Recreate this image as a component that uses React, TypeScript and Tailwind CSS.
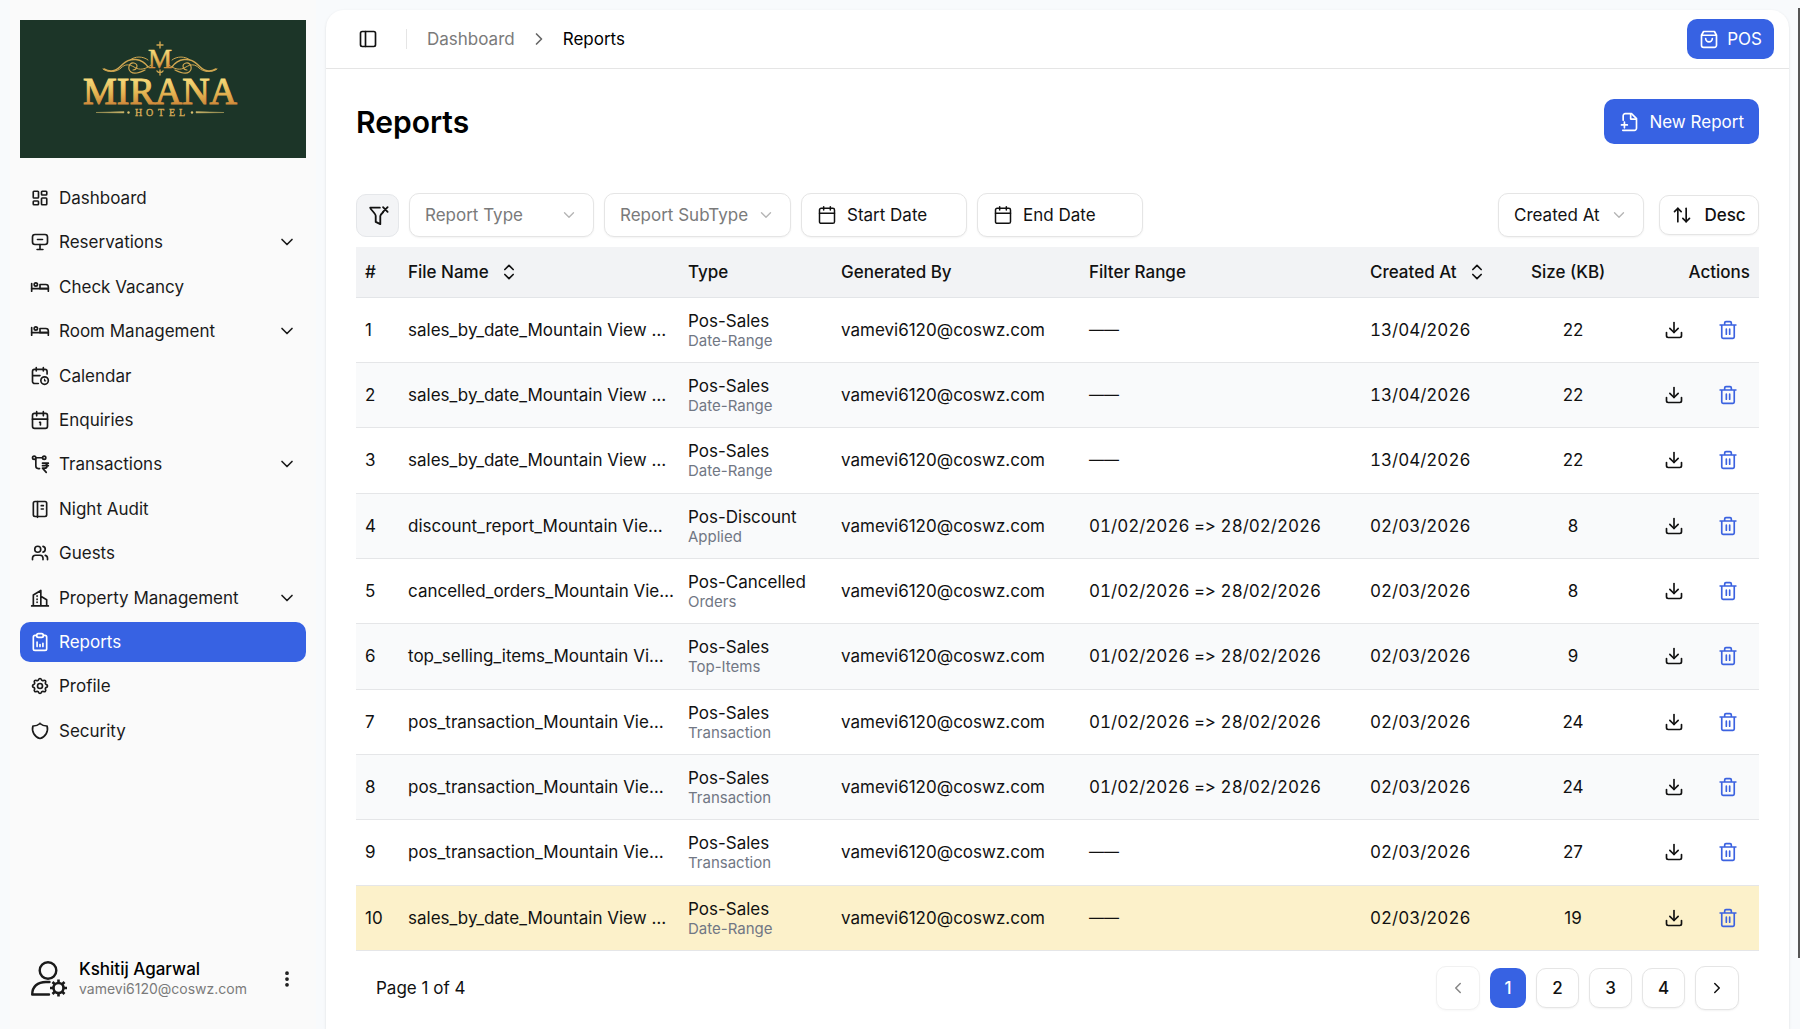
import React from "react";
import {
  ArrowUpDown,
  Calendar,
  ChevronDown,
  ChevronLeft,
  ChevronRight,
  ChevronsUpDown,
  Download,
  EllipsisVertical,
  LayoutDashboard,
  PanelLeft,
  Users,
} from "lucide-react";
import { TbBed, TbSettings, TbShield } from "react-icons/tb";

type SvgProps = { className?: string; children: React.ReactNode };

function Stroke({ className = "size-5", children }: SvgProps) {
  return (
    <svg
      viewBox="0 0 24 24"
      fill="none"
      stroke="currentColor"
      strokeWidth="2"
      strokeLinecap="round"
      strokeLinejoin="round"
      className={className}
      aria-hidden="true"
    >
      {children}
    </svg>
  );
}

const SignIcon = () => (
  <Stroke>
    <rect x="3" y="3" width="18" height="12" rx="3" />
    <path d="M9 9h6M12 15v6M8.5 21h7" />
  </Stroke>
);

const CalendarTimeIcon = () => (
  <Stroke>
    <path d="M20.500 9.500V6.500a2.500 2.500 0 0 0-2.500-2.500H5.500A2.500 2.500 0 0 0 3 6.500v12A2.500 2.500 0 0 0 5.500 21H10" />
    <path d="M7.500 2v4M16 2v4M3.500 11.500H12" />
    <circle cx="17.500" cy="17.500" r="4.500" />
    <path d="M17.500 15.800v1.900h1.300" strokeWidth="1.500" />
  </Stroke>
);

const EnquiryIcon = () => (
  <Stroke>
    <rect x="3" y="4" width="18" height="18" rx="2.5" />
    <path d="M8 2v5M16 2v5M3 11h18" />
    <path d="M11.500 14.800h1v3.200" />
  </Stroke>
);

const TransactionIcon = () => (
  <Stroke>
    <circle cx="5" cy="4.5" r="2" />
    <circle cx="17" cy="4.5" r="2" />
    <path d="M7 4.5h8M7 6v8.5a3 3 0 0 0 3 3h1.5" />
    <path d="M15 11h7M15 14h7M15 11h2.5a3 3 0 0 1 0 6H15l4.5 5" />
  </Stroke>
);

const AuditIcon = () => (
  <Stroke>
    <rect x="4" y="3" width="16" height="18" rx="2" />
    <path d="M9 3v19M13.500 8H16M13.500 12H16" />
  </Stroke>
);

const BuildingIcon = () => (
  <Stroke>
    <path d="M2 21.5h20M4 21V8.5L13 3v18M13 10l7 4v7" />
    <path d="M8.5 9.5v9" strokeDasharray="0.5 3.2" />
  </Stroke>
);

const ReportIcon = () => (
  <Stroke>
    <path d="M8 4H6a2 2 0 0 0-2 2v14a2 2 0 0 0 2 2h12a2 2 0 0 0 2-2V6a2 2 0 0 0-2-2h-2" />
    <rect x="8" y="2" width="8" height="4.5" rx="2" />
    <path d="M8.5 12v5.5M12 15v2.5M15.5 13.5v4" />
  </Stroke>
);

const FilterClearIcon = () => (
  <Stroke className="size-[22px]">
    <path d="M14 4H3.500c0 2 6 6 6 9v6.500l5 2.500v-9c0-1 1.500-2.600 3-4" />
    <path d="M17.500 3.500l5 5M22.500 3.500l-5 5" />
  </Stroke>
);

const BagIcon = () => (
  <Stroke className="size-5">
    <path d="M3 7.500 5.500 3h13L21 7.500V19.500a2.500 2.500 0 0 1-2.500 2.500h-13A2.500 2.500 0 0 1 3 19.500zM3 7.500h18" />
    <path d="M8 11.500a4 4 0 0 0 8 0" />
  </Stroke>
);

const FilePlusIcon = () => (
  <Stroke className="size-5">
    <path d="M5 10V4.500A2.500 2.500 0 0 1 7.500 2H15l6 6v11.500a2.500 2.500 0 0 1-2.500 2.500H4.500" />
    <path d="M14 2.500V8.500h6.500M6.500 12v7M3 15.500h7" />
  </Stroke>
);

const TrashIcon = () => (
  <Stroke className="size-5 text-[#3b62e0]">
    <path d="M2.500 6h19M4.500 6v14.500a1.500 1.500 0 0 0 1.500 1.500h12a1.500 1.500 0 0 0 1.500-1.500V6M8 6V3.500A1.500 1.500 0 0 1 9.500 2h5A1.500 1.500 0 0 1 16 3.500V6M10 11v6M14 11v6" />
  </Stroke>
);

const UserGearIcon = () => (
  <svg viewBox="0 0 36 36" className="size-9" fill="none" stroke="currentColor" strokeWidth="2.400" aria-hidden="true">
    <circle cx="17" cy="9.500" r="8.300" />
    <path d="M18.500 21H15C6.500 21 1.200 25.500 1.200 33.500H18" strokeLinejoin="round" strokeLinecap="round" />
    <circle cx="27.500" cy="27" r="5" strokeWidth="2.600" />
    <path
      strokeWidth="2.600"
      d="M27.500 18.500v3.500M27.500 32v3.500M19 27h3.500M32.500 27H36M21.500 21l2.500 2.500M31 30.500l2.500 2.500M33.500 21 31 23.500M24 30.500 21.500 33"
    />
  </svg>
);

function Logo() {
  return (
    <svg viewBox="0 0 286 138" className="block w-full bg-[#1c3528]" role="img" aria-label="Mirana Hotel">
      <defs>
        <linearGradient id="gold" x1="0" y1="0" x2="0" y2="1">
          <stop offset="0.2" stopColor="#f6dc7c" />
          <stop offset="0.55" stopColor="#e5b552" />
          <stop offset="0.8" stopColor="#d08c3c" />
        </linearGradient>
      </defs>
      <g fill="none" stroke="#cfa650" strokeLinecap="round">
        <path strokeWidth="1.500" d="M128 47c-6-9-18-10-25-3-5 5-10 10-19 5" />
        <path strokeWidth="1" d="M131 45c-5 4-11 6-17 2-5-3-9-3-13 1s-13 5-18 1M128 40c-5-4-13-4-18 0" />
        <path strokeWidth="1.200" d="M113 50c4 0 6-6 1-7s-7 6-3 9 10 0 14-2" />
        <path strokeWidth="1.500" d="M152 47c6-9 18-10 25-3 5 5 10 10 19 5" />
        <path strokeWidth="1" d="M149 45c5 4 11 6 17 2 5-3 9-3 13 1s13 5 18 1M152 40c5-4 13-4 18 0" />
        <path strokeWidth="1.200" d="M167 50c-4 0-6-6-1-7s7 6 3 9-10 0-14-2" />
        <path strokeWidth="1.400" d="M140 22v6M137 25h6M140 50v5M137 51c1 2 5 2 6 0" />
      </g>
      <g fill="url(#gold)" stroke="url(#gold)" fontFamily="Liberation Serif, serif" textAnchor="middle">
        <text x="140" y="48" fontSize="27" strokeWidth="0.500">M</text>
        <text x="140" y="84" fontSize="38" strokeWidth="1">MIRANA</text>
      </g>
      <text x="115 126 138 149 159" y="96" fontSize="10" fill="#d9ad58" stroke="#d9ad58" strokeWidth="0.300" fontFamily="Liberation Serif, serif">
        HOTEL
      </text>
      <path d="M76 92.500 104 91.500v1.500zM204 92.500 176 91.500v1.500z" fill="#d0b86c" stroke="#b5a45e" strokeWidth="0.500" />
      <circle cx="108.500" cy="92.500" r="1.200" fill="#d9c070" />
      <circle cx="172" cy="92.500" r="1.200" fill="#d9c070" />
    </svg>
  );
}

const nav = [
  { label: "Dashboard", icon: <LayoutDashboard className="size-[18px]" strokeWidth={2.2} /> },
  { label: "Reservations", icon: <SignIcon />, sub: true },
  { label: "Check Vacancy", icon: <TbBed className="size-5" /> },
  { label: "Room Management", icon: <TbBed className="size-5" />, sub: true },
  { label: "Calendar", icon: <CalendarTimeIcon /> },
  { label: "Enquiries", icon: <EnquiryIcon /> },
  { label: "Transactions", icon: <TransactionIcon />, sub: true },
  { label: "Night Audit", icon: <AuditIcon /> },
  { label: "Guests", icon: <Users className="size-[18px]" strokeWidth={2.2} /> },
  { label: "Property Management", icon: <BuildingIcon />, sub: true },
  { label: "Reports", icon: <ReportIcon />, active: true },
  { label: "Profile", icon: <TbSettings className="size-5" /> },
  { label: "Security", icon: <TbShield className="size-5" /> },
];

const FEB = "01/02/2026 => 28/02/2026";
const NONE = "——";
const rows = [
  ["sales_by_date_Mountain View …", "Pos-Sales", "Date-Range", NONE, "13/04/2026", 22],
  ["sales_by_date_Mountain View …", "Pos-Sales", "Date-Range", NONE, "13/04/2026", 22],
  ["sales_by_date_Mountain View …", "Pos-Sales", "Date-Range", NONE, "13/04/2026", 22],
  ["discount_report_Mountain Vie…", "Pos-Discount", "Applied", FEB, "02/03/2026", 8],
  ["cancelled_orders_Mountain Vie…", "Pos-Cancelled", "Orders", FEB, "02/03/2026", 8],
  ["top_selling_items_Mountain Vi…", "Pos-Sales", "Top-Items", FEB, "02/03/2026", 9],
  ["pos_transaction_Mountain Vie…", "Pos-Sales", "Transaction", FEB, "02/03/2026", 24],
  ["pos_transaction_Mountain Vie…", "Pos-Sales", "Transaction", FEB, "02/03/2026", 24],
  ["pos_transaction_Mountain Vie…", "Pos-Sales", "Transaction", NONE, "02/03/2026", 27],
  ["sales_by_date_Mountain View …", "Pos-Sales", "Date-Range", NONE, "02/03/2026", 19],
];

function Select({ label, value, className }: { label: string; value: string; className: string }) {
  return (
    <div className={`relative ${className}`}>
      <select
        aria-label={label}
        className="h-11 w-full appearance-none rounded-[10px] border border-[#e5e5e5] bg-white pr-9 pl-[15px] text-[17px] shadow-xs"
      >
        <option>{value}</option>
      </select>
      <ChevronDown className="pointer-events-none absolute top-[13px] right-4 size-[18px] text-[#b5b5b5]" strokeWidth={1.8} />
    </div>
  );
}

function DateButton({ label }: { label: string }) {
  return (
    <button className="flex h-11 w-[166px] items-center gap-[10px] rounded-[10px] border border-[#e5e5e5] bg-white px-[15px] shadow-xs">
      <Calendar className="size-5" strokeWidth={1.8} />
      {label}
    </button>
  );
}

function Sidebar() {
  return (
    <aside className="mx-[10px] flex w-[306px] shrink-0 flex-col bg-[#fafafa] px-[10px] pt-5">
      <Logo />
      <nav className="mt-5 flex h-[573px] flex-col justify-between">
        {nav.map((item) => (
          <a
            key={item.label}
            href="#"
            className={`flex h-10 items-center rounded-[10px] pr-[9px] pl-[9px] ${item.active ? "bg-[#3762e3] text-white" : "text-[#1a1a1a]"}`}
          >
            <span className="mr-2 flex w-[22px] justify-center">{item.icon}</span>
            <span className="grow">{item.label}</span>
            {item.sub && <ChevronDown className="size-5" />}
          </a>
        ))}
      </nav>
      <button className="mt-auto mb-[30px] flex items-center pl-[11px] text-left text-[#1a1a1a]">
        <UserGearIcon />
        <span className="ml-3 grow">
          <span className="block text-[17px] leading-5 font-medium text-black">Kshitij Agarwal</span>
          <span className="block text-[14px] leading-5 text-[#7a7a7a]">vamevi6120@coswz.com</span>
        </span>
        <EllipsisVertical className="mr-[9px] size-5" strokeWidth={2.5} />
      </button>
    </aside>
  );
}

function ReportsTable() {
  return (
    <table className="h-[704px] w-full table-fixed border-collapse text-left">
      <colgroup>
        <col className="w-[43px]" />
        <col className="w-[280px]" />
        <col className="w-[153px]" />
        <col className="w-[248px]" />
        <col className="w-[281px]" />
        <col className="w-[161px]" />
        <col className="w-[102px]" />
        <col className="w-[135px]" />
      </colgroup>
      <thead>
        <tr className="h-[50px] border-b border-[#e3e5e8] bg-[#f2f3f5] whitespace-nowrap *:px-[9px] *:font-medium">
          <th>#</th>
          <th>
            <button className="flex items-center gap-[10px]">
              File Name <ChevronsUpDown className="size-5" />
            </button>
          </th>
          <th>Type</th>
          <th>Generated By</th>
          <th>Filter Range</th>
          <th>
            <button className="flex items-center gap-[10px]">
              Created At <ChevronsUpDown className="size-5" />
            </button>
          </th>
          <th>Size (KB)</th>
          <th className="text-right">Actions</th>
        </tr>
      </thead>
      <tbody>
        {rows.map(([file, type, sub, range, created, size], i) => (
          <tr
            key={i}
            className={`border-b border-[#e5e6e8] *:px-[9px] ${i === 9 ? "bg-[#fcf1ca]" : i % 2 ? "bg-[#f9fafb]" : "bg-white"}`}
          >
            <td>{i + 1}</td>
            <td className="whitespace-nowrap">{file}</td>
            <td>
              <div className="leading-[22px]">{type}</div>
              <div className="text-[15px] leading-[18px] text-[#717784]">{sub}</div>
            </td>
            <td>{"vamevi6120@coswz.com"}</td>
            <td
              className={
                range === NONE
                  ? "text-[15px]"
                  : "whitespace-nowrap [font-feature-settings:'calt'_0,'tnum'_1]"
              }
            >
              {range}
            </td>
            <td className="tabular-nums">{created}</td>
            <td className="text-center">{size}</td>
            <td>
              <div className="flex justify-end gap-[10px]">
                <button aria-label="Download" className="flex size-11 items-center justify-center">
                  <Download className="size-5" />
                </button>
                <button aria-label="Delete" className="flex size-11 items-center justify-center">
                  <TrashIcon />
                </button>
              </div>
            </td>
          </tr>
        ))}
      </tbody>
    </table>
  );
}

function Pagination() {
  const box = "flex items-center justify-center rounded-[10px] border border-[#e5e5e5] bg-white shadow-xs";
  return (
    <div className="mt-[15px] flex items-center justify-between px-5">
      <span>Page 1 of 4</span>
      <div className="flex items-center gap-[10px] font-medium">
        <button disabled aria-label="Previous page" className={`${box} size-11 opacity-50`}>
          <ChevronLeft className="size-[18px]" />
        </button>
        <button className="h-10 w-9 rounded-[10px] bg-[#3762e3] text-white">1</button>
        {[2, 3, 4].map((n) => (
          <button key={n} className={`${box} h-10 w-[43px]`}>
            {n}
          </button>
        ))}
        <button aria-label="Next page" className={`${box} size-11`}>
          <ChevronRight className="size-[18px]" />
        </button>
      </div>
    </div>
  );
}

export default function App() {
  return (
    <div className="flex h-screen overflow-hidden bg-[#f8fafc] font-['Inter',sans-serif] text-[17px] leading-6 text-[#111]">
      <Sidebar />
      <main className="mt-[10px] min-w-0 grow rounded-t-[18px] bg-white shadow-sm">
        <header className="flex h-[59px] items-center border-b border-[#e5e5e5] pr-[15px] pl-8">
          <button aria-label="Toggle sidebar">
            <PanelLeft className="size-5" />
          </button>
          <span className="ml-7 h-5 w-px bg-[#e5e5e5]" />
          <nav aria-label="Breadcrumb" className="ml-5 flex grow items-center gap-[14px]">
            <a href="#" className="text-[#7a7a7a]">Dashboard</a>
            <ChevronRight className="size-5 text-[#666]" />
            <span className="text-black">Reports</span>
          </nav>
          <button className="flex h-10 items-center gap-2 rounded-[10px] bg-[#3762e3] px-3 text-white">
            <BagIcon />
            POS
          </button>
        </header>
        <div className="px-[30px] pt-[30px]">
          <div className="flex items-center justify-between">
            <h1 className="text-[30px] leading-9 font-semibold text-black">Reports</h1>
            <button className="flex h-[45px] items-center gap-[10px] rounded-[10px] bg-[#3762e3] px-[15px] text-white">
              <FilePlusIcon />
              New Report
            </button>
          </div>
          <div className="mt-[49px] mb-[10px] flex items-center gap-[10px]">
            <button
              aria-label="Clear filters"
              className="flex size-[43px] items-center justify-center rounded-[10px] border border-[#e5e7ea] bg-[#f3f4f6]"
            >
              <FilterClearIcon />
            </button>
            <Select label="Report type" value="Report Type" className="w-[185px] text-[#7a7a7a]" />
            <Select label="Report subtype" value="Report SubType" className="w-[187px] text-[#7a7a7a]" />
            <DateButton label="Start Date" />
            <DateButton label="End Date" />
            <Select label="Sort by" value="Created At" className="mr-[5px] ml-auto w-[146px]" />
            <button className="flex h-10 w-[100px] items-center justify-center gap-3 rounded-[10px] border border-[#e5e5e5] bg-white font-medium shadow-xs">
              <ArrowUpDown className="size-5" />
              Desc
            </button>
          </div>
          <ReportsTable />
          <Pagination />
        </div>
      </main>
      <div className="mt-2 ml-[9px] h-[950px] w-[2px] shrink-0 self-start bg-[#555]" />
    </div>
  );
}
